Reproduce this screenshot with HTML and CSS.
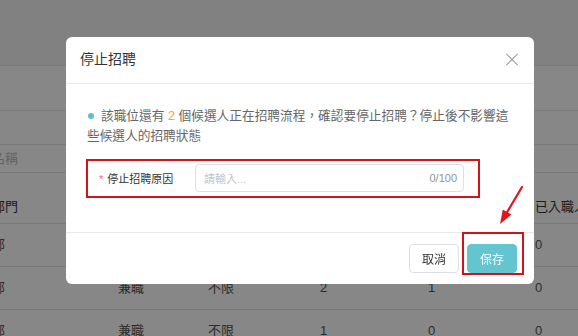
FILE: index.html
```html
<!DOCTYPE html>
<html lang="zh-Hant">
<head>
    <meta charset="UTF-8">
    <meta name="viewport" content="width=device-width, initial-scale=1.0">
    <title>停止招聘</title>
    <link rel="stylesheet" href="styles.css">
</head>
<body>
    <div class="page">
        <div class="topbar"></div>
        <div class="band"></div>
        <div class="band small"></div>
        <div class="search">職位名稱</div>
        <div class="gap"></div>
        <div class="row head">
            <span>所屬部門</span><span>職位類型</span><span>學歷要求</span><span>候選人數</span><span>面試人數</span><span>已入職人數</span>
        </div>
        <div class="row">
            <span>技術部</span><span>全職</span><span>本科</span><span>3</span><span>2</span><span>0</span>
        </div>
        <div class="row">
            <span>技術部</span><span>兼職</span><span>不限</span><span>2</span><span>1</span><span>0</span>
        </div>
        <div class="row">
            <span>技術部</span><span>兼職</span><span>不限</span><span>1</span><span>0</span><span>0</span>
        </div>
    </div>

    <div class="mask">
        <div class="modal">
            <div class="modal-header">
                <span class="modal-title">停止招聘</span>
                <span class="close"></span>
            </div>
            <div class="modal-body">
                <p class="notice">
                    <span class="dot"></span>該職位還有 <b class="num">2</b> 個候選人正在招聘流程，確認要停止招聘？停止後不影響這些候選人的招聘狀態
                </p>
                <div class="form-row">
                    <label class="label"><i>*</i>停止招聘原因</label>
                    <div class="input">
                        <span class="placeholder">請輸入...</span>
                        <span class="count">0/100</span>
                    </div>
                </div>
            </div>
            <div class="modal-footer">
                <button class="btn">取消</button>
                <button class="btn primary">保存</button>
                <span class="mark"></span>
            </div>
            <svg class="arrow" width="30" height="44" viewBox="0 0 30 44">
                <path d="M26 3 L10 30" stroke="#e3141b" stroke-width="2.2" stroke-linecap="round" fill="none"/>
                <path d="M4 40 L6.8 25.4 L15.4 30.6 Z" fill="#e3141b"/>
            </svg>
        </div>
    </div>
</body>
</html>
```

FILE: styles.css
```css
html, body {
    margin: 0;
    padding: 0;
    overflow: hidden;
}

body {
    font-family: "Liberation Sans", "Noto Sans CJK TC", sans-serif;
    background: #fff;
    color: #333;
    width: 578px;
    height: 336px;
}

/* page behind the dialog */
.page {
    margin-left: -34px;
}

.topbar {
    height: 65px;
    background: #f4f4f4;
    border-bottom: 1px solid #e6e6e6;
}

.band {
    height: 44px;
    border-bottom: 1px solid #e6e6e6;
}

.band.small {
    height: 33px;
}

.search {
    height: 27px;
    line-height: 27px;
    font-size: 13px;
    color: #bbb;
    border-bottom: 1px solid #e6e6e6;
}

.gap {
    height: 18px;
}

.row {
    display: grid;
    grid-template-columns: 152px 90px 112px 108px 107px 140px;
    height: 42px;
    line-height: 42px;
    font-size: 13px;
    color: #555;
    border-bottom: 1px solid #e6e6e6;
    white-space: nowrap;
}

.row.head {
    height: 32px;
    line-height: 32px;
    color: #333;
}

/* dialog */
.mask {
    position: fixed;
    inset: 0;
    background: rgba(0, 0, 0, 0.47);
}

.modal {
    position: relative;
    width: 468px;
    margin: 37px 0 0 66px;
    background: #fff;
    border-radius: 6px;
}

.modal-header {
    display: flex;
    justify-content: space-between;
    align-items: center;
    padding: 12px 16px 14px 14px;
    line-height: 20px;
    border-bottom: 1px solid #e8e8e8;
}

.modal-title {
    font-size: 14px;
    color: #333;
}

.close {
    position: relative;
    width: 12px;
    height: 12px;
}

.close::before,
.close::after {
    content: "";
    position: absolute;
    left: -2px;
    top: 5.5px;
    width: 16px;
    height: 1px;
    background: #9a9a9a;
    transform: rotate(45deg);
}

.close::after {
    transform: rotate(-45deg);
}

.modal-body {
    padding: 22px 14px 34px 21px;
}

.notice {
    margin: 0;
    font-size: 12.7px;
    line-height: 20px;
    color: #666;
    text-spacing-trim: space-all;
}

.dot {
    display: inline-block;
    width: 6px;
    height: 6px;
    border-radius: 50%;
    background: #5bc2cb;
    margin: 0 7px 1px 1px;
    vertical-align: middle;
}

.num {
    font-weight: normal;
    color: #f5a623;
}

.form-row {
    display: flex;
    align-items: center;
    margin: 13px 40px 0 -1px;
    padding: 3px 14px 4px 11px;
    border: 2px solid #d3121a;
}

.label {
    width: 96px;
    font-size: 11px;
    color: #333;
}

.label i {
    font-style: normal;
    color: #f56c6c;
    margin-right: 4px;
}

.input {
    flex: 1;
    display: flex;
    justify-content: space-between;
    align-items: center;
    height: 26px;
    padding: 0 6px 0 8px;
    border: 1px solid #dcdfe6;
    border-radius: 4px;
    font-size: 11px;
}

.placeholder {
    color: #c0c4cc;
}

.count {
    color: #909399;
}

.modal-footer {
    position: relative;
    display: flex;
    justify-content: flex-end;
    gap: 8px;
    padding: 11px 17px 11px 0;
    border-top: 1px solid #e8e8e8;
}

.btn {
    width: 50px;
    height: 29px;
    font-family: inherit;
    font-size: 12px;
    color: #333;
    background: #fff;
    border: 1px solid #dcdfe6;
    border-radius: 4px;
    padding: 0;
}

.btn.primary {
    color: #fff;
    background: #62c5cf;
    border-color: #62c5cf;
}

/* annotation marks */
.mark {
    position: absolute;
    left: 396px;
    top: -1px;
    width: 62px;
    height: 43px;
    box-sizing: border-box;
    border: 2px solid #d3121a;
}

.arrow {
    position: absolute;
    left: 496px;
    top: 147px;
    margin-left: -66px;
}
```
